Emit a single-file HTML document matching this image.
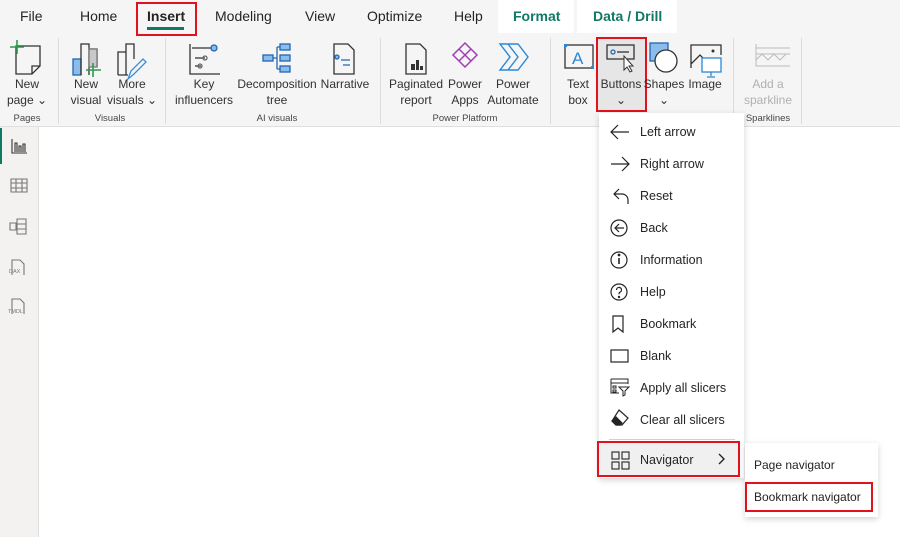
<!DOCTYPE html>
<html><head><meta charset="utf-8"><style>
*{margin:0;padding:0;box-sizing:border-box}
body{width:900px;height:537px;overflow:hidden;background:#fff;font-family:"Liberation Sans",sans-serif;color:#252423;position:relative}
.a{position:absolute}
#top{left:0;top:0;width:900px;height:127px;background:#f5f5f5;border-bottom:1px solid #e1dfdd}
.tab{position:absolute;top:8px;font-size:14px;color:#252423}
.lbl{position:absolute;font-size:12px;line-height:16px;text-align:center;color:#323130;transform:translateX(-50%);white-space:nowrap}
.grp{position:absolute;top:113px;font-size:9.5px;color:#484644;transform:translateX(-50%);white-space:nowrap}
.sep{position:absolute;top:38px;width:1px;height:86px;background:#dcdcdc}
.red{position:absolute;border:2px solid #e3111b}
#side{left:0;top:127px;width:39px;height:410px;background:#f3f2f1;border-right:1px solid #e1dfdd}
#menu{left:599px;top:113px;width:145px;height:365px;background:#fff;box-shadow:0 2px 6px rgba(0,0,0,.18)}
.mi{position:absolute;left:41px;font-size:12.5px;color:#252423}
.ic{position:absolute;left:10px}
#sub{left:745px;top:443px;width:133px;height:74px;background:#fff;box-shadow:0 2px 6px rgba(0,0,0,.18)}
</style></head><body>
<div id="top" class="a"></div>
<div class="a" style="left:498px;top:0;width:76px;height:33px;background:#fff"></div>
<div class="a" style="left:577px;top:0;width:100px;height:33px;background:#fff"></div>
<div class="tab" style="left:20px">File</div>
<div class="tab" style="left:80px">Home</div>
<div class="tab" style="left:147px;font-weight:bold">Insert</div>
<div class="a" style="left:147px;top:27px;width:37px;height:3px;background:#117865"></div>
<div class="red" style="left:136px;top:2px;width:61px;height:34px"></div>
<div class="tab" style="left:215px">Modeling</div>
<div class="tab" style="left:305px">View</div>
<div class="tab" style="left:367px">Optimize</div>
<div class="tab" style="left:454px">Help</div>
<div class="tab" style="left:513px;color:#117865;font-weight:bold">Format</div>
<div class="tab" style="left:593px;color:#117865;font-weight:bold">Data / Drill</div>

<!-- icons -->
<svg class="a" style="left:0;top:36px" width="820" height="45" fill="none" stroke-width="1.3">
<g stroke="#333"><path d="M16 10h24v20l-8 8H16z"/><path d="M32 38v-8h8"/></g>
<path d="M10 11h14M17 4v14" stroke="#2e9a4b" stroke-width="1.6"/>
<rect x="73" y="23" width="8" height="16" fill="#8bbdec" stroke="#2166b0"/>
<path d="M81 39V8h8v31M89 13h8v18" stroke="#333"/><rect x="89" y="13" width="8" height="18" fill="#c8c8c8" stroke="#777"/>
<path d="M86 34h15M93 27v14" stroke="#2e9a4b" stroke-width="1.6"/>
<path d="M118 39V16h8V8h8v15M126 16v23M118 39h10" stroke="#333"/><path d="M128 43l3-8 12-12 3 3-12 12z" stroke="#3a8fd9"/>
<path d="M190 8v30h30M192 12h20M195 22h10M195 30h6" stroke="#333"/><circle cx="214" cy="12" r="3" fill="#8bbdec" stroke="#2166b0"/><circle cx="205" cy="22" r="2" stroke="#666"/><circle cx="200" cy="30" r="2" stroke="#666"/>
<g stroke="#2166b0" fill="#8bbdec"><rect x="263" y="19" width="10" height="6"/><rect x="280" y="8" width="10" height="6"/><rect x="280" y="19" width="10" height="6"/><rect x="280" y="30" width="10" height="6"/></g><path d="M273 22h4M277 11v22M277 11h3M277 33h3" stroke="#2166b0"/>
<path d="M334 8h14l6 6v24h-20z" stroke="#333"/><path d="M341 24h9M343 29h7" stroke="#2166b0"/><circle cx="337" cy="21" r="2" fill="#8bbdec" stroke="#2166b0"/>
<path d="M406 8h14l6 6v24h-20z" stroke="#333"/><path d="M411 28h4v6h-4zM416 24h3v10h-3zM420 30h3v4h-3z" fill="#333" stroke="none"/>
<path d="M465 7l12 12-12 12-12-12zM459 13l12 12M471 13l-12 12" stroke="#a33db5" stroke-width="1.5"/>
<path d="M500 8h18l10 13-10 13h-18l10-13zM508 8l10 13-10 13" stroke="#2b88d8" stroke-width="1.4"/>
<rect x="565" y="9" width="28" height="23" stroke="#333"/><text x="572" y="28" font-size="17" fill="#2b88d8" stroke="none" font-family="Liberation Sans">A</text>
<rect x="564" y="8" width="3" height="3" fill="#2b88d8" stroke="none"/><rect x="591" y="30" width="3" height="3" fill="#2b88d8" stroke="none"/>
<rect x="607" y="9" width="27" height="14" stroke="#333"/><circle cx="613" cy="16" r="2" stroke="#2166b0"/><path d="M617 16h12" stroke="#333"/><path d="M624 20v14l3-3 3 5 2-1-3-5h4z" fill="#fff" stroke="#333" stroke-width="1"/>
<rect x="650" y="7" width="18" height="18" fill="#8bbdec" stroke="#2166b0"/><circle cx="666" cy="25" r="11" fill="#fff" stroke="#333"/>
<path d="M691 32V9h30v10M691 28l9-9 7 7" stroke="#333"/><circle cx="713" cy="15" r="1.5" fill="#333"/><rect x="702" y="22" width="19" height="14" fill="#fff" stroke="#2b88d8"/><path d="M711 36v4M707 41h8" stroke="#2b88d8"/>
<path d="M756 8v22h34M756 18h34M756 12h34M756 24l6-6 6 6 6-6 6 6 6-6" stroke="#bbb" stroke-width="1"/>
</svg>

<div class="lbl" style="left:27px;top:76px">New<br>page ⌄</div>
<div class="lbl" style="left:86px;top:76px">New<br>visual</div>
<div class="lbl" style="left:132px;top:76px">More<br>visuals ⌄</div>
<div class="lbl" style="left:204px;top:76px">Key<br>influencers</div>
<div class="lbl" style="left:277px;top:76px">Decomposition<br>tree</div>
<div class="lbl" style="left:345px;top:76px">Narrative</div>
<div class="lbl" style="left:416px;top:76px">Paginated<br>report</div>
<div class="lbl" style="left:465px;top:76px">Power<br>Apps</div>
<div class="lbl" style="left:513px;top:76px">Power<br>Automate</div>
<div class="lbl" style="left:578px;top:76px">Text<br>box</div>
<div class="a" style="left:598px;top:39px;width:47px;height:71px;background:#e6e6e6"></div>
<svg class="a" style="left:598px;top:36px" width="47" height="45" fill="none" stroke-width="1.3">
<rect x="9" y="9" width="27" height="14" stroke="#333"/><circle cx="15" cy="16" r="2" stroke="#2166b0"/><path d="M19 16h12" stroke="#333"/><path d="M26 20v14l3-3 3 5 2-1-3-5h4z" fill="#fff" stroke="#333" stroke-width="1"/></svg>
<div class="lbl" style="left:621px;top:76px">Buttons<br>⌄</div>
<div class="red" style="left:596px;top:37px;width:51px;height:75px"></div>
<div class="lbl" style="left:664px;top:76px">Shapes<br>⌄</div>
<div class="lbl" style="left:705px;top:76px">Image</div>
<div class="lbl" style="left:768px;top:76px;color:#b3b0ad">Add a<br>sparkline</div>

<div class="grp" style="left:27px">Pages</div>
<div class="grp" style="left:110px">Visuals</div>
<div class="grp" style="left:277px">AI visuals</div>
<div class="grp" style="left:465px">Power Platform</div>
<div class="grp" style="left:768px">Sparklines</div>
<div class="sep" style="left:58px"></div><div class="sep" style="left:165px"></div><div class="sep" style="left:380px"></div><div class="sep" style="left:550px"></div><div class="sep" style="left:733px"></div><div class="sep" style="left:801px"></div>

<div id="side" class="a"></div>
<div class="a" style="left:0;top:128px;width:2px;height:36px;background:#117865"></div>
<svg class="a" style="left:0;top:127px" width="39" height="200" fill="none" stroke="#333" stroke-width="1.1">
<path d="M12 12v14h15M15 25v-9h2v9M19 25v-6h2v6M23 25v-8h2v8"/>
<path d="M11 52h16v13H11zM11 56h16M11 61h16M16 52v13M22 52v13" stroke="#777"/>
<path d="M17 92h9v5h-9zM17 97h9v5h-9zM17 102h9v5h-9zM10 96h6v7h-6z" stroke="#777"/>
<path d="M12 148v-15h8l4 4v11" stroke="#777"/><text x="9" y="146" font-size="5.5" fill="#777" stroke="none" font-family="Liberation Sans">DAX</text>
<path d="M12 187v-15h8l4 4v11" stroke="#777"/><text x="8" y="186" font-size="5.5" fill="#777" stroke="none" font-family="Liberation Sans">TMDL</text>
</svg>

<div id="menu" class="a">
<svg class="a" style="left:0;top:0" width="145" height="330" fill="none" stroke="#252423" stroke-width="1.2">
<path d="M12 19h18M19 12l-7 7 7 7"/>
<path d="M12 51h18M23 44l7 7-7 7"/>
<path d="M20 76l-5 5 5 5M15 81h8a6 6 0 0 1 6 6v4"/>
<circle cx="20" cy="115" r="8"/><path d="M16 115h9M20 111l-4 4 4 4"/>
<circle cx="20" cy="147" r="8"/><path d="M20 145v6" stroke-width="1.6"/><circle cx="20" cy="142" r=".8" fill="#252423"/>
<circle cx="20" cy="179" r="8"/><path d="M17.5 177a2.5 2.5 0 1 1 3.5 2.2c-.8.4-1 1-1 2" /><circle cx="20" cy="184" r=".6" fill="#252423"/>
<path d="M14 203v16l5-4 5 4v-16z"/>
<rect x="12" y="237" width="17" height="12"/>
<path d="M12 266h17v5M12 266v14h8M12 270h17M14 273h3v2h-3zM14 277h3v2h-3zM20 274h10l-4 4v4l-2 1v-5z" stroke-width="1"/>
<path d="M20 297l9 8-6 7h-6l-4-4z"/><path d="M13 308l4-4 6 6-2 2h-4z" fill="#252423"/>
</svg>
<div class="mi" style="top:12px">Left arrow</div>
<div class="mi" style="top:44px">Right arrow</div>
<div class="mi" style="top:76px">Reset</div>
<div class="mi" style="top:108px">Back</div>
<div class="mi" style="top:140px">Information</div>
<div class="mi" style="top:172px">Help</div>
<div class="mi" style="top:204px">Bookmark</div>
<div class="mi" style="top:236px">Blank</div>
<div class="mi" style="top:268px">Apply all slicers</div>
<div class="mi" style="top:300px">Clear all slicers</div>
<div class="a" style="left:10px;top:326px;width:126px;height:1px;background:#d0d0d0"></div>
<div class="a" style="left:0;top:330px;width:141px;height:33px;background:#f0f0f0"></div>
<svg class="a" style="left:0;top:330px" width="141" height="33" fill="none" stroke="#252423" stroke-width="1.1">
<rect x="13" y="9" width="7" height="7"/><rect x="23" y="9" width="7" height="7"/><rect x="13" y="19" width="7" height="7"/><rect x="23" y="19" width="7" height="7"/>
<path d="M120 11l5 5-5 5" stroke-width="1.4"/></svg>
<div class="mi" style="top:340px">Navigator</div>
</div>
<div class="red" style="left:597px;top:441px;width:143px;height:36px"></div>
<div id="sub" class="a">
<div class="a" style="left:9px;top:15px;font-size:12px">Page navigator</div>
<div class="a" style="left:9px;top:47px;font-size:12px">Bookmark navigator</div>
</div>
<div class="red" style="left:745px;top:482px;width:128px;height:30px"></div>
</body></html>
